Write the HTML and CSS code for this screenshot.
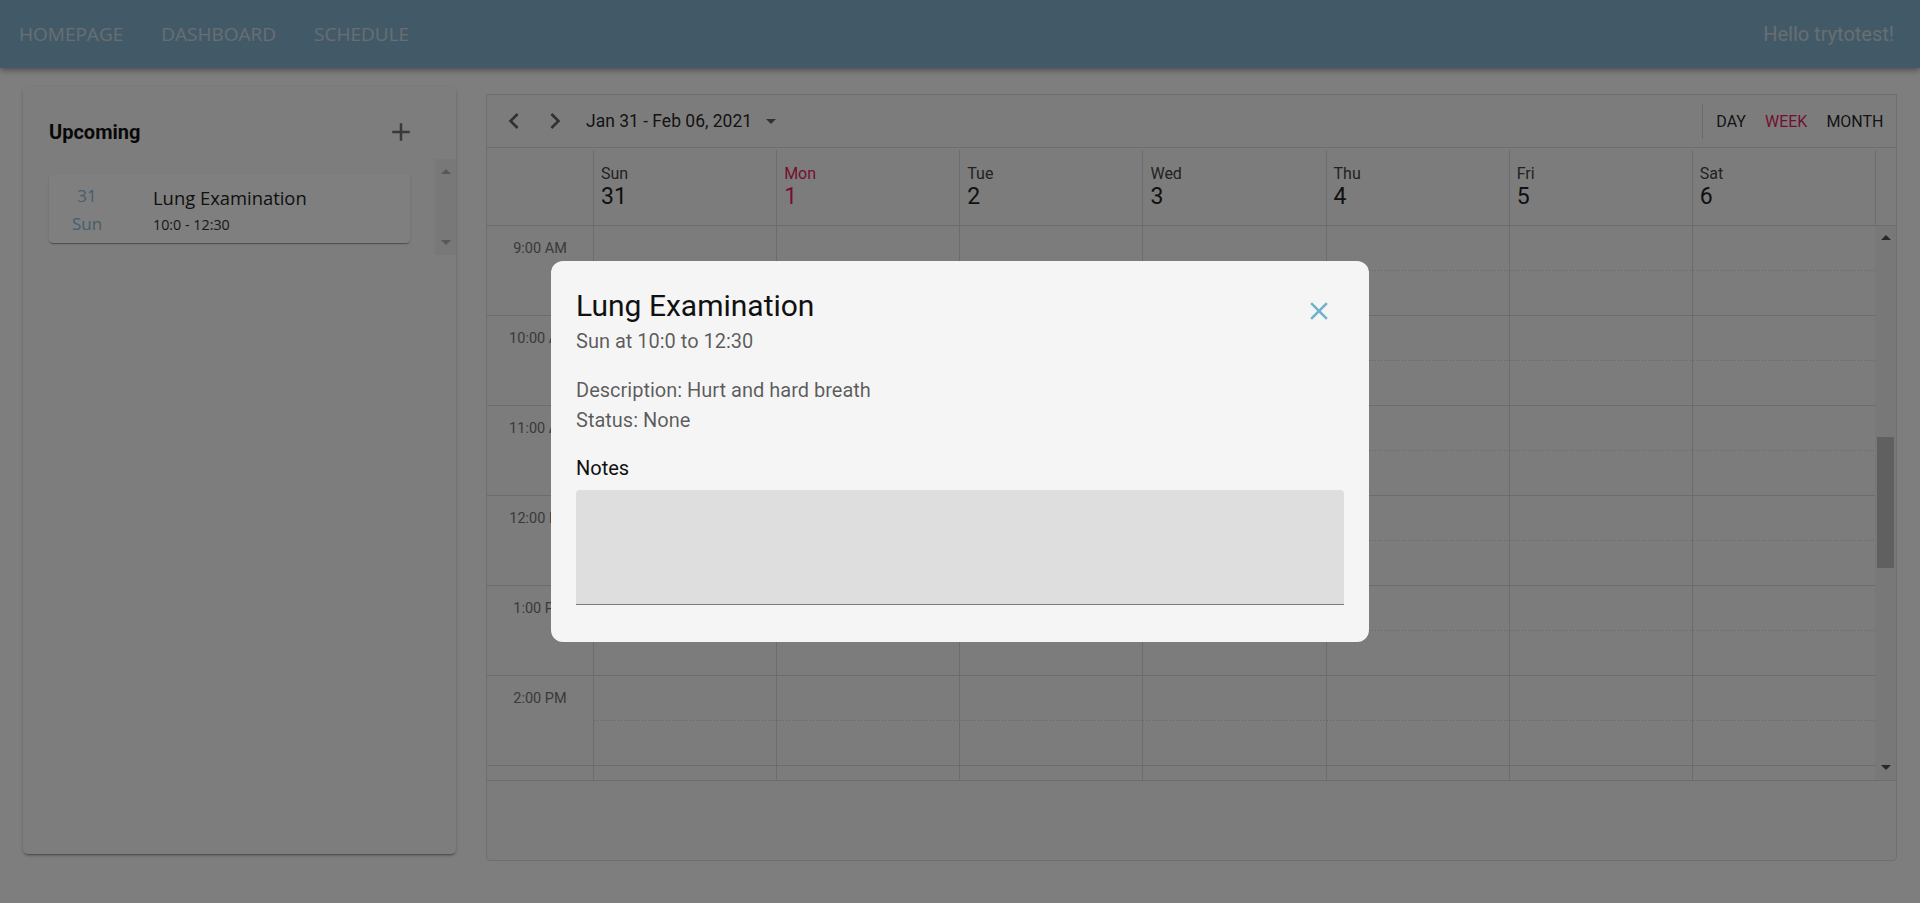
FILE: index.html
```html
<!DOCTYPE html>
<html lang="en">
<head>
<meta charset="utf-8">
<title>Schedule</title>
<link rel="stylesheet" href="styles.css">
</head>
<body>
<header class="navbar">
  <nav class="nav-links">
    <a class="nav-link" href="#">HOMEPAGE</a>
    <a class="nav-link" href="#">DASHBOARD</a>
    <a class="nav-link" href="#">SCHEDULE</a>
  </nav>
  <div class="greeting">Hello trytotest!</div>
</header>

<main class="main">
  <section class="upcoming-card">
    <div class="upcoming-header">
      <h2 class="upcoming-title">Upcoming</h2>
      <span class="add-btn">
        <svg viewBox="0 0 24 24" width="30" height="30"><path d="M19 13h-6v6h-2v-6H5v-2h6V5h2v6h6v2z"/></svg>
      </span>
    </div>
    <div class="upcoming-list-wrap">
      <div class="upcoming-list">
        <div class="event-item">
          <div class="event-date">
            <span>31</span>
            <span>Sun</span>
          </div>
          <div class="event-info">
            <div class="event-title">Lung Examination</div>
            <div class="event-time">10:0 - 12:30</div>
          </div>
        </div>
      </div>
      <div class="scrollbar scrollbar-light">
        <span class="sb-arrow sb-up"></span>
        <span class="sb-arrow sb-down"></span>
      </div>
    </div>
  </section>

  <section class="scheduler">
    <div class="toolbar">
      <div class="toolbar-left">
        <span class="tb-icon">
          <svg viewBox="0 0 24 24" width="32" height="32"><path d="M15.41 7.41L14 6l-6 6 6 6 1.41-1.41L10.83 12z"/></svg>
        </span>
        <span class="tb-icon">
          <svg viewBox="0 0 24 24" width="32" height="32"><path d="M10 6L8.59 7.41 13.17 12l-4.58 4.59L10 18l6-6z"/></svg>
        </span>
        <span class="date-range">Jan 31 - Feb 06, 2021</span>
        <span class="dropdown-icon">
          <svg viewBox="0 0 24 24" width="24" height="24"><path d="M7 10l5 5 5-5z"/></svg>
        </span>
      </div>
      <div class="view-switcher">
        <span class="view-btn">DAY</span>
        <span class="view-btn active">WEEK</span>
        <span class="view-btn">MONTH</span>
      </div>
    </div>

    <div class="day-header">
      <div class="dh-time"></div>
      <div class="dh-cell"><div class="dh-name">Sun</div><div class="dh-num">31</div></div>
      <div class="dh-cell today"><div class="dh-name">Mon</div><div class="dh-num">1</div></div>
      <div class="dh-cell"><div class="dh-name">Tue</div><div class="dh-num">2</div></div>
      <div class="dh-cell"><div class="dh-name">Wed</div><div class="dh-num">3</div></div>
      <div class="dh-cell"><div class="dh-name">Thu</div><div class="dh-num">4</div></div>
      <div class="dh-cell"><div class="dh-name">Fri</div><div class="dh-num">5</div></div>
      <div class="dh-cell"><div class="dh-name">Sat</div><div class="dh-num">6</div></div>
      <div class="dh-spacer"></div>
    </div>

    <div class="grid-wrap">
      <div class="grid">
        <div class="time-cell">9:00 AM</div>
        <div class="day-cell"></div><div class="day-cell"></div><div class="day-cell"></div><div class="day-cell"></div><div class="day-cell"></div><div class="day-cell"></div><div class="day-cell"></div>
        <div class="time-cell">10:00 AM</div>
        <div class="day-cell"></div><div class="day-cell"></div><div class="day-cell"></div><div class="day-cell"></div><div class="day-cell"></div><div class="day-cell"></div><div class="day-cell"></div>
        <div class="time-cell">11:00 AM</div>
        <div class="day-cell"></div><div class="day-cell"></div><div class="day-cell"></div><div class="day-cell"></div><div class="day-cell"></div><div class="day-cell"></div><div class="day-cell"></div>
        <div class="time-cell">12:00 PM</div>
        <div class="day-cell"></div><div class="day-cell"></div><div class="day-cell"></div><div class="day-cell"></div><div class="day-cell"></div><div class="day-cell"></div><div class="day-cell"></div>
        <div class="time-cell">1:00 PM</div>
        <div class="day-cell"></div><div class="day-cell"></div><div class="day-cell"></div><div class="day-cell"></div><div class="day-cell"></div><div class="day-cell"></div><div class="day-cell"></div>
        <div class="time-cell">2:00 PM</div>
        <div class="day-cell"></div><div class="day-cell"></div><div class="day-cell"></div><div class="day-cell"></div><div class="day-cell"></div><div class="day-cell"></div><div class="day-cell"></div>
        <div class="time-cell"></div>
        <div class="day-cell"></div><div class="day-cell"></div><div class="day-cell"></div><div class="day-cell"></div><div class="day-cell"></div><div class="day-cell"></div><div class="day-cell"></div>
      </div>
      <div class="scrollbar scrollbar-dark">
        <span class="sb-arrow sb-up"></span>
        <span class="sb-thumb"></span>
        <span class="sb-arrow sb-down"></span>
      </div>
    </div>
  </section>
</main>

<div class="overlay">
  <div class="dialog">
    <div class="dialog-header">
      <div class="dialog-heading">
        <h1 class="dialog-title">Lung Examination</h1>
        <div class="dialog-subtitle">Sun at 10:0 to 12:30</div>
      </div>
      <span class="close-btn">
        <svg viewBox="0 0 24 24" width="30" height="30"><path d="M19 6.41L17.59 5 12 10.59 6.41 5 5 6.41 10.59 12 5 17.59 6.41 19 12 13.41 17.59 19 19 17.59 13.41 12z"/></svg>
      </span>
    </div>
    <div class="dialog-details">
      <div>Description: Hurt and hard breath</div>
      <div>Status: None</div>
    </div>
    <div class="notes-label">Notes</div>
    <div class="notes-field"></div>
  </div>
</div>
</body>
</html>
```

FILE: styles.css
```css
* { box-sizing: border-box; }

html, body {
  margin: 0;
  height: 903px;
  overflow: hidden;
}

body {
  background: #fdfdfd;
  font-family: Roboto, "Liberation Sans", Arial, sans-serif;
  color: #222;
}

/* ---------- Navbar ---------- */
.navbar {
  position: relative;
  z-index: 1;
  height: 68px;
  background: #84b4d0;
  display: flex;
  align-items: center;
  justify-content: space-between;
  padding: 0 26px 0 19px;
  box-shadow: 0 2px 4px -1px rgba(0,0,0,.2), 0 4px 5px 0 rgba(0,0,0,.14), 0 1px 10px 0 rgba(0,0,0,.12);
}

.nav-links {
  display: flex;
  gap: 38px;
}

.nav-link {
  font-family: "Open Sans", "Liberation Sans", sans-serif;
  font-size: 19px;
  color: #d0dce3;
  text-decoration: none;
}

.greeting {
  font-size: 20px;
  color: #d0dce3;
}

/* ---------- Main layout ---------- */
.main {
  display: flex;
  align-items: flex-start;
  gap: 30px;
  padding: 19px 0 0 23px;
}

/* ---------- Upcoming card ---------- */
.upcoming-card {
  width: 433px;
  height: 767px;
  background: #fbfbfb;
  border-radius: 5px;
  box-shadow: 0 3px 1px -2px rgba(0,0,0,.2), 0 2px 2px 0 rgba(0,0,0,.14), 0 1px 5px 0 rgba(0,0,0,.12);
}

.upcoming-header {
  display: flex;
  align-items: center;
  justify-content: space-between;
  height: 30px;
  margin-top: 30px;
  padding: 0 40px 0 26px;
}

.upcoming-title {
  margin: 0;
  font-size: 20px;
  font-weight: 700;
  line-height: 24px;
  color: #111;
}

.add-btn {
  display: flex;
  fill: rgba(0,0,0,.54);
}

.upcoming-list-wrap {
  display: flex;
  height: 96px;
  margin-top: 12px;
}

.upcoming-list {
  flex: 1;
  padding: 15px 25px 0 26px;
}

.event-item {
  display: flex;
  height: 69px;
  background: #fff;
  border-radius: 4px;
  box-shadow: 0 2px 1px -1px rgba(0,0,0,.2), 0 1px 1px 0 rgba(0,0,0,.14), 0 1px 3px 0 rgba(0,0,0,.12);
  font-family: "Open Sans", "Liberation Sans", sans-serif;
}

.event-date {
  width: 76px;
  display: flex;
  flex-direction: column;
  align-items: center;
  padding-top: 8px;
  font-size: 17px;
  line-height: 28px;
  color: #8fbcd8;
}

.event-info {
  margin-left: 28px;
  padding-top: 11px;
}

.event-title {
  font-size: 18.4px;
  line-height: 26px;
  color: #222;
}

.event-time {
  margin-top: 3px;
  font-size: 14.3px;
  line-height: 22px;
  color: #333;
}

/* ---------- Fake scrollbars ---------- */
.scrollbar {
  width: 21px;
  background: #f1f1f1;
  display: flex;
  flex-direction: column;
  align-items: center;
}

.sb-arrow {
  width: 0;
  height: 0;
  border-left: 5px solid transparent;
  border-right: 5px solid transparent;
}

.scrollbar-light .sb-arrow.sb-up { margin-top: 10px; border-bottom: 5px solid #b0b0b0; }
.scrollbar-light .sb-arrow.sb-down { margin-top: auto; margin-bottom: 10px; border-top: 5px solid #b0b0b0; }

.scrollbar-dark .sb-arrow.sb-up { margin-top: 9px; border-bottom: 5px solid #505050; }
.scrollbar-dark .sb-arrow.sb-down { margin-top: auto; margin-bottom: 10px; border-top: 5px solid #505050; }

.sb-thumb {
  width: 17px;
  height: 131px;
  margin-top: 197px;
  background: #c1c1c1;
}

/* ---------- Scheduler ---------- */
.scheduler {
  width: 1411px;
  height: 767px;
  margin-top: 7px;
  background: #f8f8f8;
  border: 1px solid #dcdcdc;
  border-radius: 0 0 4px 4px;
  display: flex;
  flex-direction: column;
}

.toolbar {
  height: 53px;
  flex: none;
  display: flex;
  align-items: center;
  justify-content: space-between;
  padding: 0 3px 0 11px;
  border-bottom: 1px solid #dcdcdc;
}

.toolbar-left {
  display: flex;
  align-items: center;
}

.tb-icon {
  display: flex;
  fill: rgba(0,0,0,.6);
}

.tb-icon + .tb-icon { margin-left: 9px; }

.date-range {
  margin-left: 15px;
  font-size: 17.5px;
  color: rgba(0,0,0,.87);
}

.dropdown-icon {
  display: flex;
  margin-left: 7px;
  fill: rgba(0,0,0,.6);
}

.view-switcher {
  display: flex;
  align-items: center;
  height: 35px;
  border-left: 1px solid #d5d5d5;
  padding-left: 4px;
}

.view-btn {
  padding: 0 9.5px;
  font-size: 16px;
  color: rgba(0,0,0,.87);
}

.view-btn.active { color: #e91e63; }

.day-header {
  flex: none;
  height: 78px;
  display: grid;
  grid-template-columns: 106px repeat(7, 1fr) 21px;
  border-bottom: 1px solid #d9d9d9;
}

.dh-cell {
  border-left: 1px solid #d9d9d9;
  margin-top: 2px;
  padding: 15px 0 0 7px;
}

.dh-spacer {
  border-left: 1px solid #d9d9d9;
  margin-top: 2px;
}

.dh-name {
  font-size: 16px;
  line-height: 18px;
  color: #444;
}

.dh-num {
  margin-top: 1px;
  font-size: 23px;
  line-height: 25px;
  color: #222;
}

.dh-cell.today .dh-name,
.dh-cell.today .dh-num { color: #e91e63; }

.grid-wrap {
  flex: none;
  height: 555px;
  display: flex;
  border-bottom: 1px solid #d9d9d9;
  overflow: hidden;
}

.grid {
  flex: 1;
  display: grid;
  grid-template-columns: 106px repeat(7, 1fr);
  grid-auto-rows: 90px;
}

.time-cell {
  border-bottom: 1px solid #d9d9d9;
  padding-top: 14px;
  text-align: center;
  font-size: 14.5px;
  line-height: 17px;
  color: #757575;
}

.day-cell {
  border-left: 1px solid #d9d9d9;
  border-bottom: 1px solid #d9d9d9;
  background-image: repeating-linear-gradient(to right, #cfcfcf 0 1px, transparent 1px 3px);
  background-repeat: no-repeat;
  background-size: 100% 1px;
  background-position: 0 44px;
}

/* ---------- Dialog ---------- */
.overlay {
  position: fixed;
  inset: 0;
  z-index: 10;
  background: rgba(0,0,0,.5);
  display: flex;
  align-items: center;
  justify-content: center;
}

.dialog {
  width: 818px;
  background: #f5f5f5;
  border-radius: 12px;
  padding: 27px 25px 37px 25px;
}

.dialog-header {
  display: flex;
  justify-content: space-between;
  align-items: flex-start;
}

.dialog-title {
  margin: 0;
  font-size: 30px;
  font-weight: 400;
  line-height: 36px;
  color: #111;
}

.dialog-subtitle {
  margin-top: 5px;
  font-size: 20px;
  line-height: 24px;
  color: rgba(0,0,0,.64);
}

.close-btn {
  display: flex;
  margin: 8px 10px 0 0;
  fill: #70b1cd;
}

.dialog-details {
  margin-top: 22px;
  font-size: 20px;
  line-height: 30px;
  color: rgba(0,0,0,.64);
}

.notes-label {
  margin-top: 21px;
  font-size: 20px;
  line-height: 24px;
  color: #111;
}

.notes-field {
  margin-top: 10px;
  height: 115px;
  background: rgba(0,0,0,.09);
  border-radius: 4px 4px 0 0;
  border-bottom: 1px solid rgba(0,0,0,.45);
}
```
